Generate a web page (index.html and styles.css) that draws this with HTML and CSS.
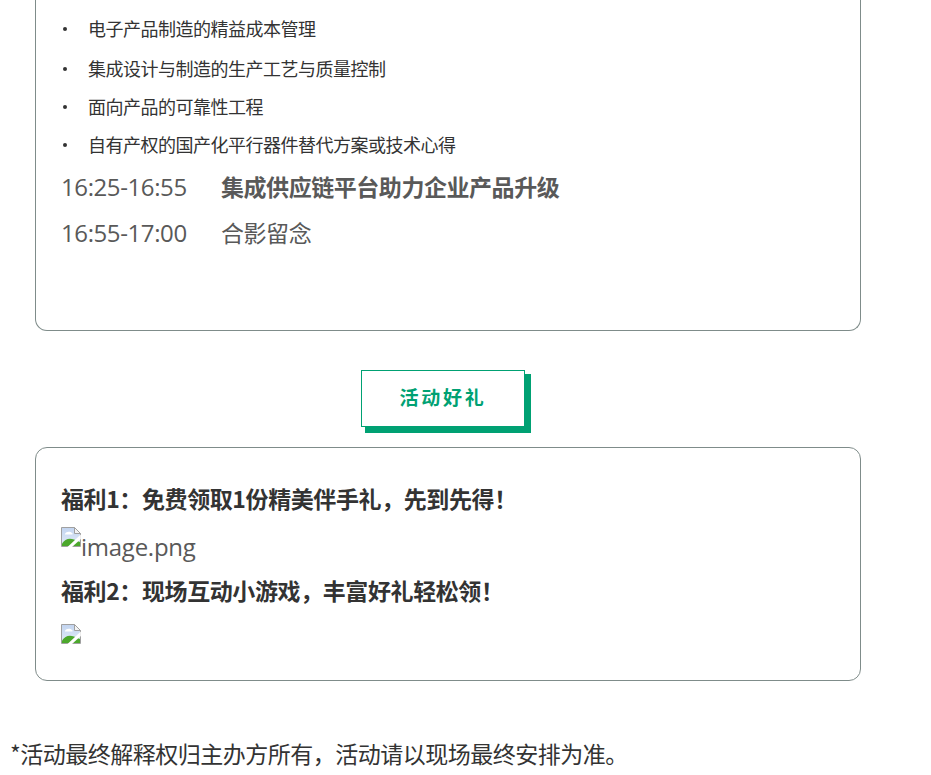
FILE: index.html
```html
<!DOCTYPE html>
<html lang="zh-CN">
<head>
<meta charset="utf-8">
<title>活动</title>
<link rel="stylesheet" href="styles.css">
</head>
<body>
<main class="page">
  <section class="card card-top">
    <ul class="topics">
      <li>电子产品制造的精益成本管理</li>
      <li class="second">集成设计与制造的生产工艺与质量控制</li>
      <li>面向产品的可靠性工程</li>
      <li>自有产权的国产化平行器件替代方案或技术心得</li>
    </ul>
    <p class="slot"><span class="time">16:25-16:55</span><strong>集成供应链平台助力企业产品升级</strong></p>
    <p class="slot"><span class="time">16:55-17:00</span><span>合影留念</span></p>
  </section>
  <div class="heading-row"><h2 class="heading">活动好礼</h2></div>
  <section class="card card-gift">
    <p class="gift">福利1：免费领取1份精美伴手礼，先到先得！</p>
    <p class="broken">
      <svg class="broken-icon" viewBox="0 0 20 20"><use href="#bi"/></svg><span class="alt">image.png</span>
    </p>
    <p class="gift gift-2">福利2：现场互动小游戏，丰富好礼轻松领！</p>
    <p class="broken broken-2">
      <svg class="broken-icon" viewBox="0 0 20 20"><use href="#bi"/></svg>
    </p>
  </section>
  <p class="note">*活动最终解释权归主办方所有，活动请以现场最终安排为准。</p>
</main>
<svg class="defs" width="0" height="0">
  <defs>
    <linearGradient id="sky" x1="0" y1="0" x2="0" y2="1">
      <stop offset="0" stop-color="#c2d4f0"/>
      <stop offset="1" stop-color="#e4edf8"/>
    </linearGradient>
  </defs>
  <symbol id="bi" viewBox="0 0 20 20">
    <path d="M0.5 0.5H13.5L19.5 6.5V19.5H0.5Z" fill="url(#sky)" stroke="#a0a0a0"/>
    <path d="M13.5 .5V6.5H19.5Z" fill="#f4f4f4" stroke="#a0a0a0"/>
    <path d="M4 7c1-2.500 5-3 7-1 1 .6 1 1.500 0 1.500H4.500C3.800 7.500 3.800 7.400 4 7Z" fill="#fff"/>
    <path d="M1 19V16.500C4 12 8 10.500 13 12.500L19 15V19Z" fill="#4ca82c"/>
    <path d="M19.800 7.500 6.500 20H11L19.800 12Z" fill="#fff"/>
  </symbol>
</svg>
</body>
</html>
```
FILE: styles.css
```css
html, body {
  margin: 0;
  height: 775px;
  overflow: hidden;
  background: #fff;
}
body {
  font-family: "Noto Sans CJK SC", "Noto Sans", sans-serif;
  color: #595959;
}
.page {
  width: 931px;
  display: flex;
  flex-direction: column;
}
.defs { position: absolute; }
.card {
  box-sizing: border-box;
  width: 826px;
  margin-left: 35px;
  border: 1px solid #7f8c8a;
  border-radius: 12px;
  padding: 0 25px;
}
.card-top {
  height: 331px;
  border-top: 0;
  border-top-left-radius: 0;
  border-top-right-radius: 0;
  padding-top: 15px;
}
.topics {
  list-style: none;
  margin: 0 0 13px;
  padding: 0;
}
.topics li {
  position: relative;
  padding-left: 27px;
  font-size: 18px;
  line-height: 26px;
  color: #333;
  margin-bottom: 12px;
  letter-spacing: -0.5px;
}
.topics li.second { margin-top: 14px; }
.topics li::before {
  content: "";
  position: absolute;
  left: 2px;
  top: 12px;
  width: 4px;
  height: 4px;
  border-radius: 50%;
  background: #333;
}
.slot {
  margin: 0 0 13px;
  font-size: 23px;
  line-height: 33px;
  letter-spacing: -0.45px;
  display: flex;
}
.slot strong { font-weight: 700; }
.time {
  width: 160px;
  font-family: "Open Sans", "Noto Sans", sans-serif;
  font-size: 24px;
  letter-spacing: -0.4px;
}
.heading-row {
  display: flex;
  justify-content: center;
  margin: 39px 0 20px;
  padding-right: 45px;
}
.heading {
  box-sizing: border-box;
  width: 164px;
  height: 57px;
  margin: 0;
  border: 1px solid #00a173;
  box-shadow: 5px 5px 0 1px #00a173;
  background: #fff;
  color: #00a173;
  font-size: 19px;
  line-height: 52px;
  font-weight: 700;
  text-align: center;
  letter-spacing: 2.8px;
}
.card-gift {
  height: 234px;
  padding-top: 33px;
}
.gift {
  margin: 0;
  font-size: 23px;
  line-height: 34px;
  font-weight: 700;
  color: #333;
  letter-spacing: -0.4px;
}
.gift-2 { margin-top: 10px; }
.broken {
  margin: 12px 0 0;
  display: flex;
  font-family: "Open Sans", "Noto Sans", sans-serif;
  font-size: 24px;
  line-height: 32px;
}
.broken-2 { margin-top: 17px; }
.broken-icon {
  width: 20px;
  height: 20px;
  flex: none;
}
.alt {
  margin-top: 4px;
  letter-spacing: -0.25px;
}
.note {
  margin: 54px 0 0 10px;
  font-size: 23px;
  line-height: 36px;
  color: #333;
  letter-spacing: -0.5px;
}
```
